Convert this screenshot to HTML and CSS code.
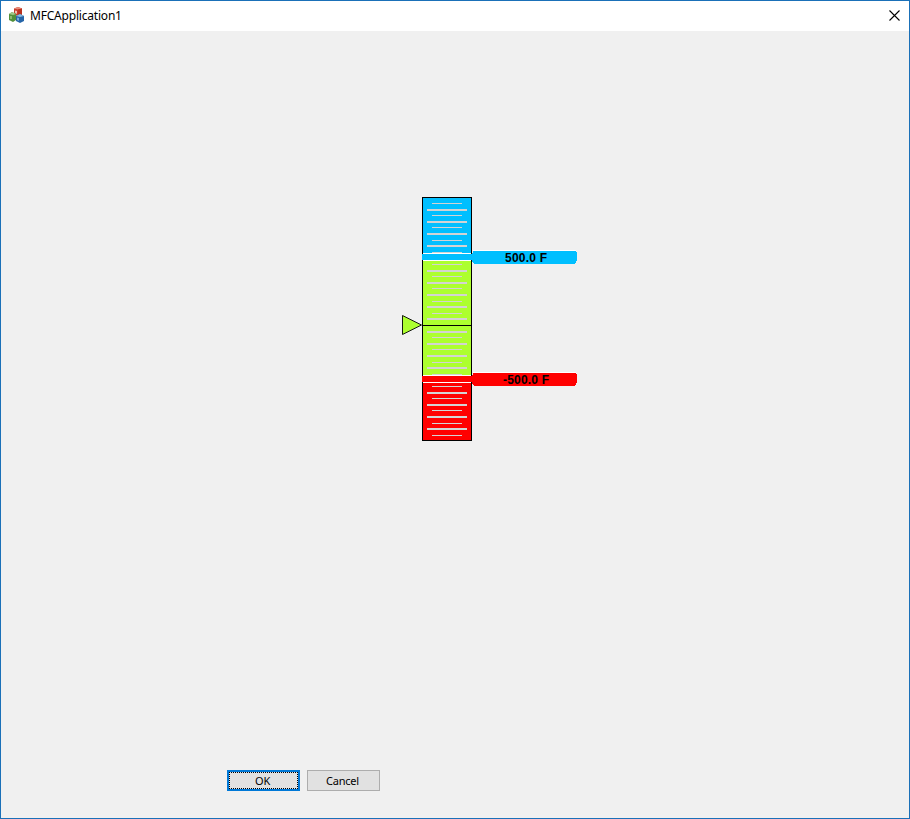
FILE: index.html
```html
<!DOCTYPE html>
<html lang="en">
<head>
<meta charset="utf-8">
<title>MFCApplication1</title>
<link rel="stylesheet" href="styles.css">
</head>
<body>
<div class="window">
  <header class="titlebar">
    <svg class="app-icon" width="16" height="16" viewBox="0 0 16 16">
      <path d="M5 1.500 9 0l4 1.500v6l-4 2-4-2z" fill="#c73d2b"/>
      <path d="m5 1.500 4-1.500 4 1.500-4 1z" fill="#e98b78"/>
      <path d="M9 2.500l4-1v6l-4 2z" fill="#b9321f"/>
      <path d="M6 3.500l2 .5v3l-2-1z" fill="#eec0b4"/>
      <path d="m0 7 3-2 4 2v6l-3 2-4-2z" fill="#52903a"/>
      <path d="m0 7 3-2 4 2-3 1z" fill="#a6c98c"/>
      <path d="M1 9h2v3H1z" fill="#8dba72"/>
      <path d="m7 9 4-2 4 2v5l-4 2-4-2z" fill="#2565a8"/>
      <path d="m7 9 4-2 4 2-4 1z" fill="#86b9df"/>
      <path d="M8 10.500l2 .5v3l-2-1z" fill="#78a9d6"/>
    </svg>
    <h1 class="title">MFCApplication1</h1>
    <svg class="close" width="11" height="11" viewBox="0 0 11 11"><path d="M.5.5l10 10M10.500.5l-10 10" stroke="#000" stroke-width="1.100"/></svg>
  </header>
  <main class="content">
    <svg class="gauge" width="180" height="244" viewBox="402 197 180 244" shape-rendering="crispEdges">
      <rect x="422" y="197" width="50" height="244" fill="#000"/>
      <rect x="423" y="198" width="48" height="56" fill="#00bfff"/>
      <rect x="423" y="260" width="48" height="116" fill="#adff2f"/>
      <rect x="423" y="382" width="48" height="58" fill="#f00"/>
      <path class="ticks" d="M432 203.500h30M432 215.500h30M432 227.500h30M432 240.500h30M432 252.500h30M432 264.500h30M432 276.500h30M432 288.500h30M432 301.500h30M432 313.500h30M432 337.500h30M432 349.500h30M432 362.500h30M432 374.500h30M432 386.500h30M432 398.500h30M432 410.500h30M432 423.500h30M432 435.500h30"/>
      <path class="ticks major" d="M427 210h40M427 222h40M427 234h40M427 246h40M427 271h40M427 283h40M427 295h40M427 307h40M427 319h40M427 332h40M427 344h40M427 356h40M427 368h40M427 393h40M427 405h40M427 417h40M427 429h40"/>
      <path d="M422 325.500h50" stroke="#000"/>
      <path d="M402.500 315.500v19l19-9.500z" fill="#adff2f" stroke="#000" stroke-width=".9" shape-rendering="auto"/>
      <path d="M423 253h48v8h-48zM423 375h48v8h-48zM473 250h103v1h-103zM473 372h103v1h-103z" fill="#fff"/>
      <path d="M422 254h50v-1h1v-2h103v1h1v9h-1v2h-1v1h-101v-1h-1v-1h-1v-2h-50z" fill="#00bfff"/>
      <path d="M422 376h50v-1h1v-2h103v1h1v9h-1v2h-1v1h-101v-1h-1v-1h-1v-2h-50z" fill="#f00"/>
      <text class="limit" x="505" y="262" textLength="42">500.0 F</text>
      <text class="limit" x="503" y="384" textLength="46">-500.0 F</text>
    </svg>
  </main>
  <footer class="actions">
    <button class="button primary">OK</button>
    <button class="button">Cancel</button>
  </footer>
</div>
</body>
</html>
```

FILE: styles.css
```css
* { box-sizing: border-box; }
body { margin: 0; font-family: "Noto Sans", sans-serif; color: #000; }
.window {
  width: 910px; height: 819px;
  display: flex; flex-direction: column;
  background: #f0f0f0; border: 1px solid #1a70b8;
}
.titlebar {
  height: 30px; display: flex; align-items: center;
  padding: 0 9px 0 8px; background: #fff;
}
.app-icon { flex: none; margin-right: 5px; margin-top: -2px; }
.title { flex: 1; margin: 0; font-size: 12px; font-weight: 400; line-height: 16px; letter-spacing: -.2px; }
.close { flex: none; margin-top: -2px; }
.content { flex: 1; padding: 166px 0 0 401px; }
.gauge { display: block; }
.ticks { fill: none; stroke: #d3d3d3; stroke-width: 1; }
.major { stroke-width: 2; }
.limit { font: bold 12px "Liberation Sans", sans-serif; }
.actions { display: flex; gap: 7px; padding: 0 0 27px 226px; }
.button {
  width: 73px; height: 21px; padding: 0 2px 0 0;
  font: 11px/17px "Noto Sans", sans-serif; letter-spacing: -.2px;
  background: #e1e1e1; border: 1px solid #adadad; border-radius: 0;
}
.primary { border: 2px solid #0078d7; outline: 1px dotted #000; outline-offset: -3px; }
```
